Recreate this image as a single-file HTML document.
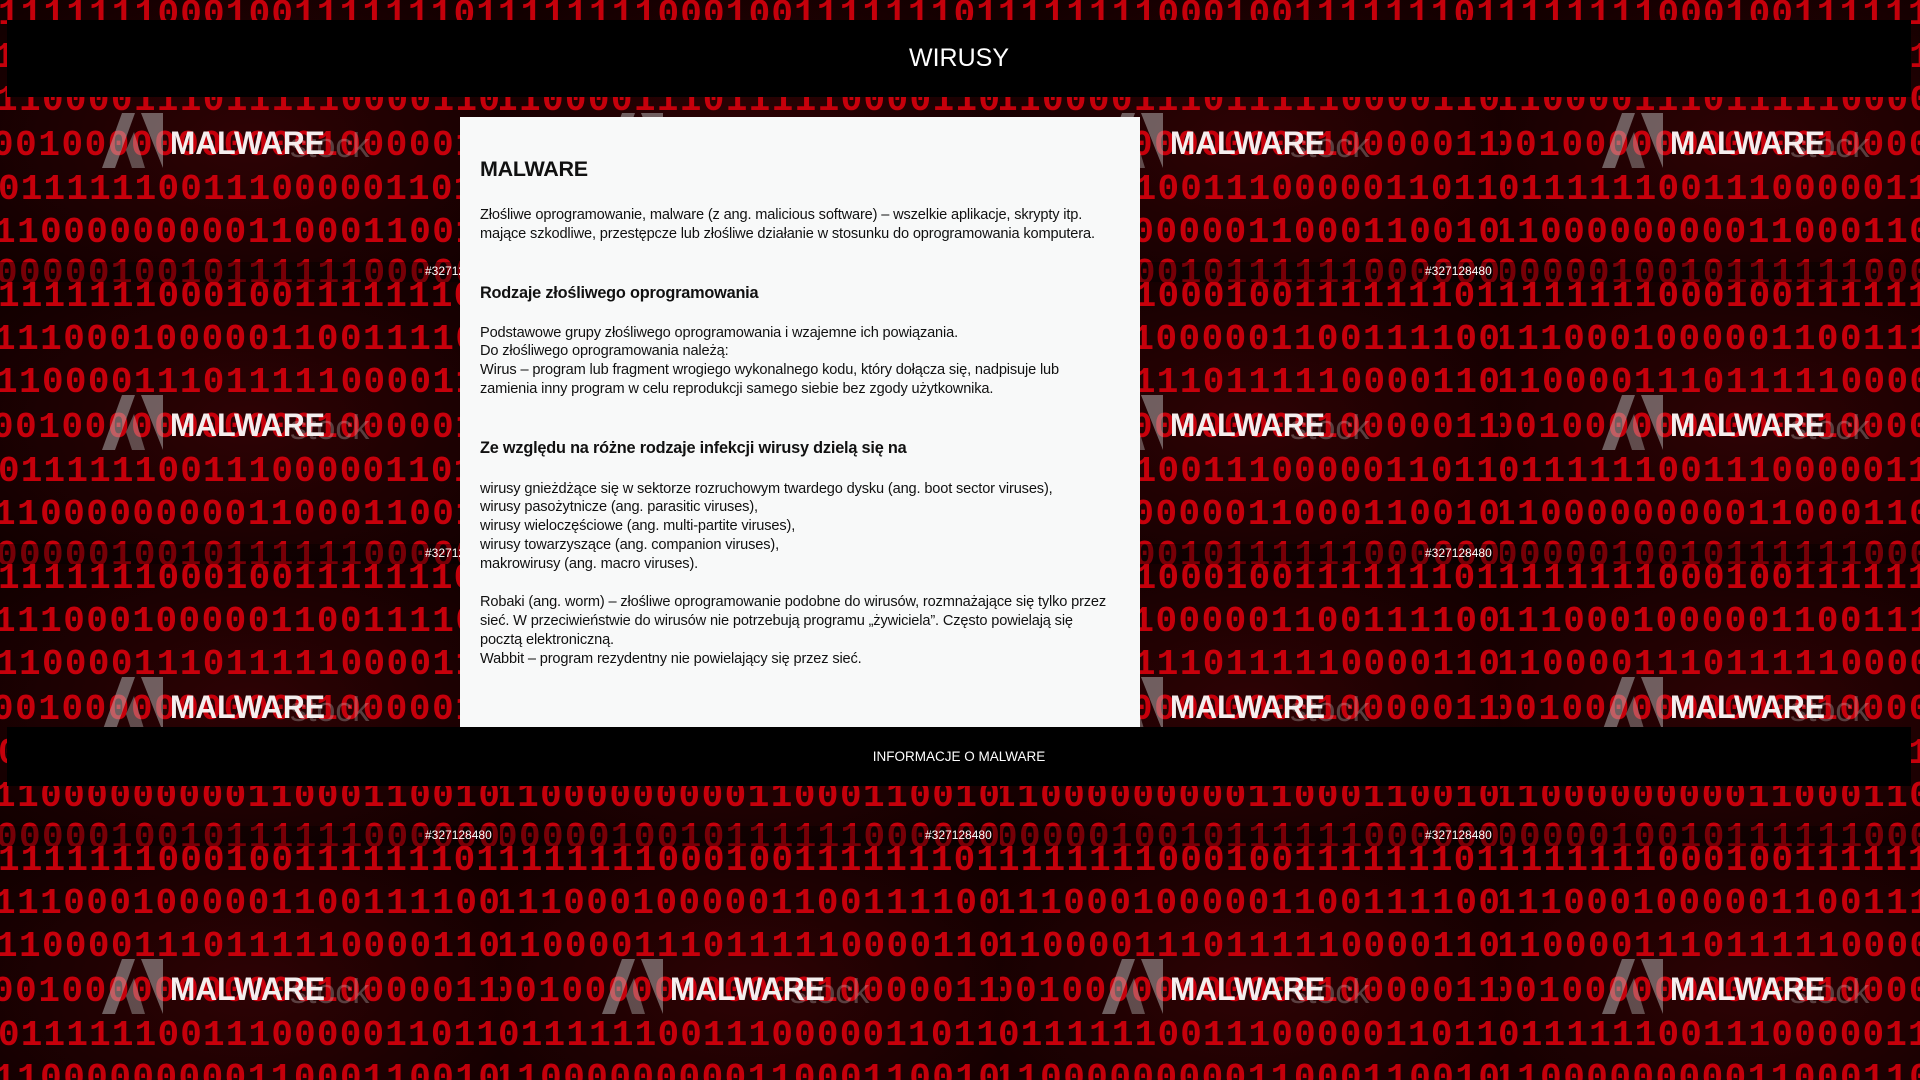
<!DOCTYPE html>
<html><head><meta charset="utf-8">
<style>
html,body{margin:0;padding:0;width:1920px;height:1080px;overflow:hidden;background:#1a0000;font-family:"Liberation Sans",sans-serif}
svg.bg{position:absolute;left:0;top:0}
.bar{position:absolute;left:7px;width:1904px;background:#000;color:#fff;text-align:center}
#hdr{top:20px;height:77px;line-height:77px;font-size:25px}
#ftr{top:727px;height:59px;line-height:59px;font-size:13.5px}
#box{position:absolute;left:460px;top:117px;width:680px;height:610px;background:#f8f9f9}
.t{position:absolute;left:20px;white-space:nowrap;color:#111;font-size:14.6px;line-height:19px;letter-spacing:-0.15px}
.h1{font-size:21.5px;font-weight:bold;letter-spacing:-0.3px}
.h3{font-size:16.3px;font-weight:bold;letter-spacing:-0.2px}
</style></head><body>
<svg class="bg" width="1920" height="1080" xmlns="http://www.w3.org/2000/svg">
<defs>
<radialGradient id="g" cx="50%" cy="50%" r="70%"><stop offset="0" stop-color="#2e0204"/><stop offset="1" stop-color="#100000"/></radialGradient>
<pattern id="p" width="500" height="282" patternUnits="userSpaceOnUse">
<rect width="500" height="282" fill="url(#g)"/>
<g font-family="Liberation Mono, monospace" font-weight="bold" font-size="36" fill="#d8000c" opacity="0.9">
<text x="-2" y="24" textLength="500">1111111000100111111101</text>
<text x="-6" y="67" textLength="506">1110001000001100111100</text>
<text x="-4" y="110" textLength="504">1100001110111110000110</text>
<text x="-8" y="155" textLength="508">0010000000000010000011</text>
<text x="-2" y="199" textLength="500">0111111001110000011011</text>
<text x="-6" y="242" textLength="506">1100000000011000110010</text>
<text x="-4" y="283" textLength="504">0000010010111111000000</text>
</g>
<rect x="0" y="262" width="500" height="20" fill="#000" opacity="0.4"/>
<text x="425" y="275" font-family="Liberation Sans, sans-serif" font-size="12" fill="#fff">#327128480</text>
<polygon points="102,168 122,113 135,113 115,168" fill="#bbb" opacity="0.5"/>
<polygon points="141,113 163,113 163,168" fill="#bbb" opacity="0.5"/>
<polygon points="126,150 134,132 145,168 132,168" fill="#bbb" opacity="0.4"/>
<text x="290" y="157" font-family="Liberation Sans, sans-serif" font-size="34" fill="#ccc" opacity="0.3">stock</text>
<text x="170" y="154" font-family="Liberation Sans, sans-serif" font-weight="bold" font-size="32" fill="#f4eeee" textLength="155" lengthAdjust="spacingAndGlyphs">MALWARE</text>
</pattern>
</defs>
<rect width="1920" height="1080" fill="url(#p)"/>
</svg>

<div class="bar" id="hdr">WIRUSY</div>

<div id="box">
<div class="t h1" style="top:43px">MALWARE</div>
<div class="t" style="top:89px">Złośliwe oprogramowanie, malware (z ang. malicious software) – wszelkie aplikacje, skrypty itp.</div>
<div class="t" style="top:108px">mające szkodliwe, przestępcze lub złośliwe działanie w stosunku do oprogramowania komputera.</div>
<div class="t h3" style="top:167px">Rodzaje złośliwego oprogramowania</div>
<div class="t" style="top:207px">Podstawowe grupy złośliwego oprogramowania i wzajemne ich powiązania.</div>
<div class="t" style="top:225px">Do złośliwego oprogramowania należą:</div>
<div class="t" style="top:244px">Wirus – program lub fragment wrogiego wykonalnego kodu, który dołącza się, nadpisuje lub</div>
<div class="t" style="top:263px">zamienia inny program w celu reprodukcji samego siebie bez zgody użytkownika.</div>
<div class="t h3" style="top:322px">Ze względu na różne rodzaje infekcji wirusy dzielą się na</div>
<div class="t" style="top:363px">wirusy gnieżdżące się w sektorze rozruchowym twardego dysku (ang. boot sector viruses),</div>
<div class="t" style="top:381px">wirusy pasożytnicze (ang. parasitic viruses),</div>
<div class="t" style="top:400px">wirusy wieloczęściowe (ang. multi-partite viruses),</div>
<div class="t" style="top:419px">wirusy towarzyszące (ang. companion viruses),</div>
<div class="t" style="top:438px">makrowirusy (ang. macro viruses).</div>
<div class="t" style="top:476px">Robaki (ang. worm) – złośliwe oprogramowanie podobne do wirusów, rozmnażające się tylko przez</div>
<div class="t" style="top:495px">sieć. W przeciwieństwie do wirusów nie potrzebują programu „żywiciela”. Często powielają się</div>
<div class="t" style="top:514px">pocztą elektroniczną.</div>
<div class="t" style="top:533px">Wabbit – program rezydentny nie powielający się przez sieć.</div>
</div>

<div class="bar" id="ftr">INFORMACJE O MALWARE</div>
</body></html>
